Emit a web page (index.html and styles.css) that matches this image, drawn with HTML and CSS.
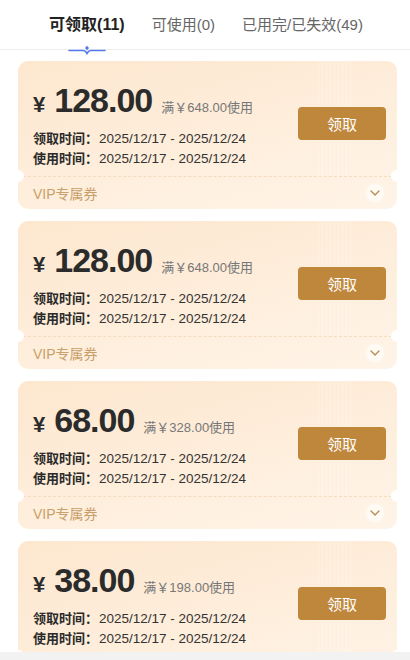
FILE: index.html
```html
<!DOCTYPE html>
<html>
    <head>
        <meta charset="utf-8">
        <title>优惠券</title>
        <link rel="stylesheet" href="styles.css">
    </head>
    <body>
        <div class="page">
            <div class="tabs">
                <div class="tab active">
                    可领取(11)
                    <svg class="tab-mark" width="38" height="10" viewBox="0 0 38 10">
                        <path d="M1 5.5 H15 Q17 5.5 18 7 L19 8.5 L20 7 Q21 5.5 23 5.5 H37" fill="none" stroke="#5479ec" stroke-width="1.6" stroke-linecap="round"/>
                        <path d="M19 0.8 L21 3 L19 5.2 L17 3 Z" fill="#5479ec"/>
                    </svg>
                </div>
                <div class="tab">可使用(0)</div>
                <div class="tab">已用完/已失效(49)</div>
            </div>

            <div class="list">
                <div class="coupon">
                    <div class="coupon-main">
                        <div class="coupon-info">
                            <div class="price-row">
                                <span class="yen">¥</span>
                                <span class="amount">128.00</span>
                                <span class="limit">满￥648.00使用</span>
                            </div>
                            <div class="date-row"><b>领取时间：</b>2025/12/17 - 2025/12/24</div>
                            <div class="date-row"><b>使用时间：</b>2025/12/17 - 2025/12/24</div>
                        </div>
                        <button class="claim-btn">领取</button>
                    </div>
                    <div class="coupon-foot">
                        <span>VIP专属券</span>
                        <span class="more"><svg width="10" height="6" viewBox="0 0 10 6"><path d="M1 1 L5 5 L9 1" fill="none" stroke="#b98c55" stroke-width="1.4" stroke-linecap="round" stroke-linejoin="round"/></svg></span>
                    </div>
                </div>

                <div class="coupon">
                    <div class="coupon-main">
                        <div class="coupon-info">
                            <div class="price-row">
                                <span class="yen">¥</span>
                                <span class="amount">128.00</span>
                                <span class="limit">满￥648.00使用</span>
                            </div>
                            <div class="date-row"><b>领取时间：</b>2025/12/17 - 2025/12/24</div>
                            <div class="date-row"><b>使用时间：</b>2025/12/17 - 2025/12/24</div>
                        </div>
                        <button class="claim-btn">领取</button>
                    </div>
                    <div class="coupon-foot">
                        <span>VIP专属券</span>
                        <span class="more"><svg width="10" height="6" viewBox="0 0 10 6"><path d="M1 1 L5 5 L9 1" fill="none" stroke="#b98c55" stroke-width="1.4" stroke-linecap="round" stroke-linejoin="round"/></svg></span>
                    </div>
                </div>

                <div class="coupon">
                    <div class="coupon-main">
                        <div class="coupon-info">
                            <div class="price-row">
                                <span class="yen">¥</span>
                                <span class="amount">68.00</span>
                                <span class="limit">满￥328.00使用</span>
                            </div>
                            <div class="date-row"><b>领取时间：</b>2025/12/17 - 2025/12/24</div>
                            <div class="date-row"><b>使用时间：</b>2025/12/17 - 2025/12/24</div>
                        </div>
                        <button class="claim-btn">领取</button>
                    </div>
                    <div class="coupon-foot">
                        <span>VIP专属券</span>
                        <span class="more"><svg width="10" height="6" viewBox="0 0 10 6"><path d="M1 1 L5 5 L9 1" fill="none" stroke="#b98c55" stroke-width="1.4" stroke-linecap="round" stroke-linejoin="round"/></svg></span>
                    </div>
                </div>

                <div class="coupon">
                    <div class="coupon-main">
                        <div class="coupon-info">
                            <div class="price-row">
                                <span class="yen">¥</span>
                                <span class="amount">38.00</span>
                                <span class="limit">满￥198.00使用</span>
                            </div>
                            <div class="date-row"><b>领取时间：</b>2025/12/17 - 2025/12/24</div>
                            <div class="date-row"><b>使用时间：</b>2025/12/17 - 2025/12/24</div>
                        </div>
                        <button class="claim-btn">领取</button>
                    </div>
                    <div class="coupon-foot">
                        <span>VIP专属券</span>
                        <span class="more"><svg width="10" height="6" viewBox="0 0 10 6"><path d="M1 1 L5 5 L9 1" fill="none" stroke="#b98c55" stroke-width="1.4" stroke-linecap="round" stroke-linejoin="round"/></svg></span>
                    </div>
                </div>
            </div>
        </div>
        <div class="bottom-bar"></div>
    </body>
</html>
```
FILE: styles.css
```css
body {
    margin: 0;
    background: #ffffff;
    font-family: "Liberation Sans", "Noto Sans CJK SC", sans-serif;
    color: #333333;
}

.page {
    height: 652px;
    overflow: hidden;
}

/* Tabs */
.tabs {
    height: 50px;
    display: flex;
    justify-content: center;
    align-items: center;
    gap: 27px;
    border-bottom: 1px solid #eeeeee;
    box-sizing: border-box;
    padding-left: 2px;
}

.tab {
    position: relative;
    font-size: 15px;
    color: #666666;
    line-height: 50px;
}

.tab.active {
    font-size: 16px;
    font-weight: bold;
    color: #222222;
}

.tab-mark {
    position: absolute;
    left: 50%;
    bottom: -5px;
    margin-left: -19px;
}

/* Coupon list */
.list {
    padding: 11px 13px 0 18px;
    display: flex;
    flex-direction: column;
    gap: 12px;
}

.coupon {
    border-radius: 10px;
    background:
        repeating-linear-gradient(90deg, rgba(255, 255, 255, 0.3) 0 1px, transparent 1px 4px) 300px 0 / 34px 116px no-repeat,
        linear-gradient(165deg, #fde7cf 0%, #feeedc 55%, #fff4e8 100%);
}

.coupon-main {
    display: flex;
    align-items: flex-start;
    justify-content: space-between;
    padding: 21px 11px 7px 15px;
}

.price-row {
    display: flex;
    align-items: baseline;
    height: 36px;
    line-height: 36px;
    margin-bottom: 11px;
}

.yen {
    font-size: 22px;
    font-weight: bold;
    color: #2b2b2b;
    margin-right: 9px;
}

.amount {
    font-size: 34px;
    font-weight: bold;
    color: #2b2b2b;
    letter-spacing: -1px;
    margin-right: 9px;
}

.limit {
    font-size: 13px;
    color: #777777;
}

.date-row {
    font-size: 13.5px;
    line-height: 20px;
    color: #333333;
    white-space: nowrap;
}

.date-row b {
    display: inline-block;
    width: 66px;
    font-size: 13px;
    color: #2b2b2b;
}

.claim-btn {
    width: 88px;
    height: 33px;
    margin-top: 25px;
    border: none;
    border-radius: 4px;
    background: #bf873b;
    color: #ffffff;
    font-family: "Liberation Sans", "Noto Sans CJK SC", sans-serif;
    font-size: 15px;
    padding: 0;
}

.coupon-foot {
    position: relative;
    height: 32px;
    display: flex;
    align-items: center;
    justify-content: space-between;
    padding: 0 15px;
    border-top: 1px dashed #f3dcc2;
    font-size: 14px;
    color: #c9a06a;
}

/* Side notches on the dashed line */
.coupon-foot::before,
.coupon-foot::after {
    content: "";
    position: absolute;
    top: -7px;
    width: 12px;
    height: 12px;
    border-radius: 50%;
    background: #ffffff;
}

.coupon-foot::before {
    left: -6px;
}

.coupon-foot::after {
    right: -6px;
}

.more {
    width: 18px;
    height: 18px;
    border-radius: 50%;
    background: #fffaf3;
    box-shadow: 0 0 3px #fff8ef;
    display: flex;
    align-items: center;
    justify-content: center;
    margin-right: -2px;
}

.bottom-bar {
    height: 8px;
    background: #f2f2f2;
}
```
